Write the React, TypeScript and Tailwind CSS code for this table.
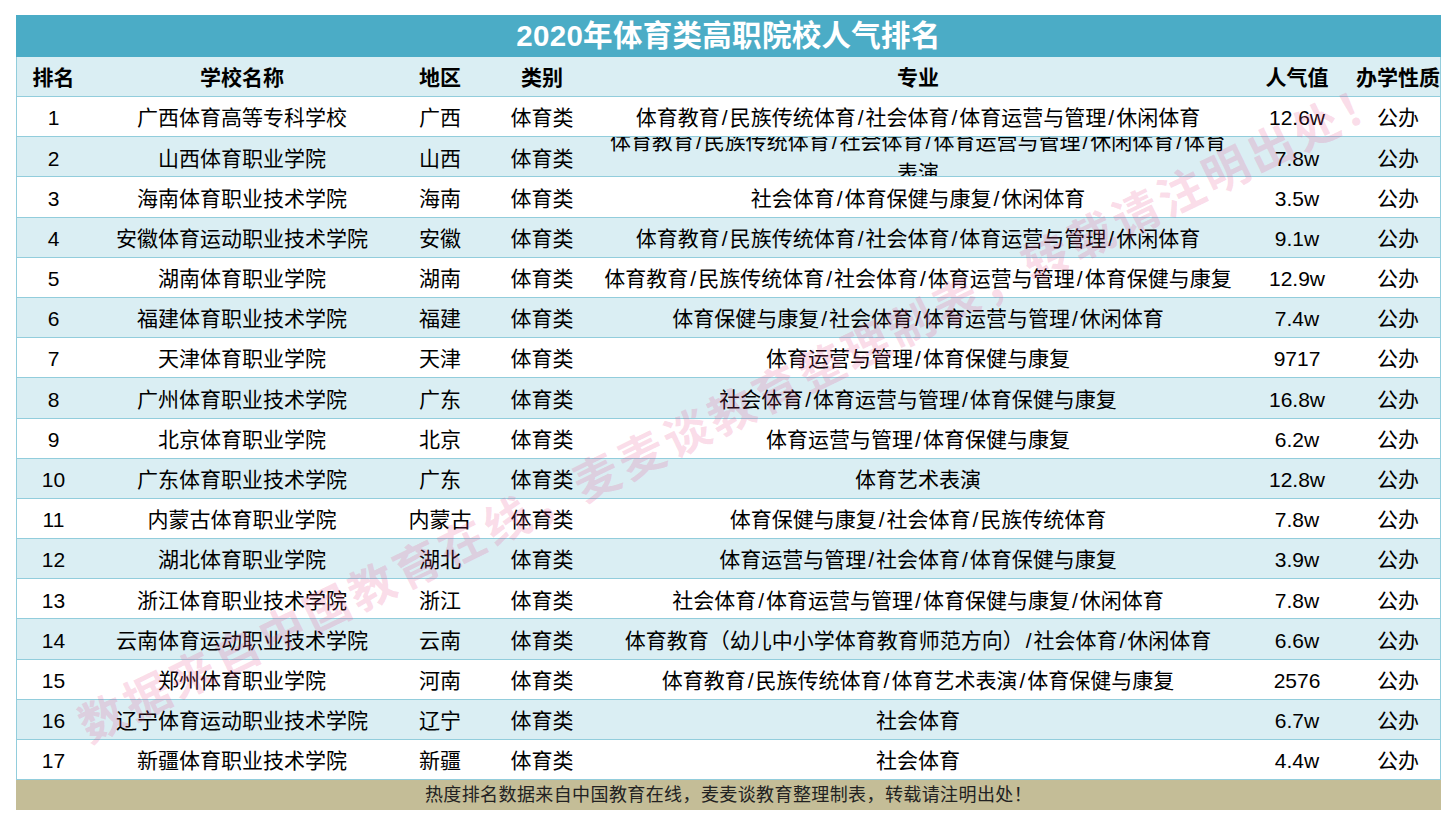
import React from "react";

type Row = { n: number; school: string; region: string; major: string; pop: string; wrap?: boolean };

const rows: Row[] = [
  { n: 1, school: "广西体育高等专科学校", region: "广西", major: "体育教育/民族传统体育/社会体育/体育运营与管理/休闲体育", pop: "12.6w" },
  { n: 2, school: "山西体育职业学院", region: "山西", major: "", pop: "7.8w", wrap: true },
  { n: 3, school: "海南体育职业技术学院", region: "海南", major: "社会体育/体育保健与康复/休闲体育", pop: "3.5w" },
  { n: 4, school: "安徽体育运动职业技术学院", region: "安徽", major: "体育教育/民族传统体育/社会体育/体育运营与管理/休闲体育", pop: "9.1w" },
  { n: 5, school: "湖南体育职业学院", region: "湖南", major: "体育教育/民族传统体育/社会体育/体育运营与管理/体育保健与康复", pop: "12.9w" },
  { n: 6, school: "福建体育职业技术学院", region: "福建", major: "体育保健与康复/社会体育/体育运营与管理/休闲体育", pop: "7.4w" },
  { n: 7, school: "天津体育职业学院", region: "天津", major: "体育运营与管理/体育保健与康复", pop: "9717" },
  { n: 8, school: "广州体育职业技术学院", region: "广东", major: "社会体育/体育运营与管理/体育保健与康复", pop: "16.8w" },
  { n: 9, school: "北京体育职业学院", region: "北京", major: "体育运营与管理/体育保健与康复", pop: "6.2w" },
  { n: 10, school: "广东体育职业技术学院", region: "广东", major: "体育艺术表演", pop: "12.8w" },
  { n: 11, school: "内蒙古体育职业学院", region: "内蒙古", major: "体育保健与康复/社会体育/民族传统体育", pop: "7.8w" },
  { n: 12, school: "湖北体育职业学院", region: "湖北", major: "体育运营与管理/社会体育/体育保健与康复", pop: "3.9w" },
  { n: 13, school: "浙江体育职业技术学院", region: "浙江", major: "社会体育/体育运营与管理/体育保健与康复/休闲体育", pop: "7.8w" },
  { n: 14, school: "云南体育运动职业技术学院", region: "云南", major: "体育教育（幼儿中小学体育教育师范方向）/社会体育/休闲体育", pop: "6.6w" },
  { n: 15, school: "郑州体育职业学院", region: "河南", major: "体育教育/民族传统体育/体育艺术表演/体育保健与康复", pop: "2576" },
  { n: 16, school: "辽宁体育运动职业技术学院", region: "辽宁", major: "社会体育", pop: "6.7w" },
  { n: 17, school: "新疆体育职业技术学院", region: "新疆", major: "社会体育", pop: "4.4w" },
];

const grid = "grid grid-cols-[73px_304px_92px_112px_640px_118px_84px]";
const cell = "flex items-center justify-center whitespace-nowrap overflow-hidden";
const dcell = "flex items-center justify-center whitespace-nowrap overflow-hidden pt-[3px]";

function Slashed({ text }: { text: string }) {
  const parts = text.split("/");
  return (
    <>
      {parts.map((p, i) => (
        <React.Fragment key={i}>
          {i > 0 && <span className="mx-[2px]">/</span>}
          {p}
        </React.Fragment>
      ))}
    </>
  );
}

export default function App() {
  return (
    <div
      className="relative w-[1452px] h-[832px] bg-white pt-[15px] pl-[16px] overflow-hidden text-black"
      style={{ fontFamily: "'Liberation Sans', 'Noto Sans CJK SC', sans-serif" }}
    >
      <div className="w-[1425px]">
        <div className="h-[42px] bg-[#4bacc6] flex items-center justify-center text-white font-bold text-[29.5px] tracking-[0.3px]">
          2020年体育类高职院校人气排名
        </div>
        <div className="border-x border-[#92cddc]">
          <div className={`${grid} h-[40px] bg-[#daeef3] border-b border-[#92cddc] font-bold text-[21px]`}>
            <div className={dcell}>排名</div>
            <div className={dcell}>学校名称</div>
            <div className={dcell}>地区</div>
            <div className={dcell}>类别</div>
            <div className={dcell}>专业</div>
            <div className={dcell}>人气值</div>
            <div className={`${dcell} justify-start`}>办学性质</div>
          </div>
          {rows.map((r) => (
            <div
              key={r.n}
              className={`${grid} h-[40.2px] border-b border-[#92cddc] text-[21px] ${r.n % 2 === 0 ? "bg-[#daeef3]" : "bg-white"}`}
            >
              <div className={dcell}>{r.n}</div>
              <div className={dcell}>{r.school}</div>
              <div className={dcell}>{r.region}</div>
              <div className={dcell}>体育类</div>
              {r.wrap ? (
                <div className="flex items-center justify-center overflow-hidden">
                  <div className="text-center leading-[31px] whitespace-nowrap">
                    <Slashed text="体育教育/民族传统体育/社会体育/体育运营与管理/休闲体育/体育" />
                    <br />
                    表演
                  </div>
                </div>
              ) : (
                <div className={dcell}>
                  <Slashed text={r.major} />
                </div>
              )}
              <div className={dcell}>{r.pop}</div>
              <div className={dcell}>公办</div>
            </div>
          ))}
        </div>
        <div className="h-[30px] bg-[#c4bd97] flex items-center justify-center text-[18px] tracking-[0.4px] text-[#222]">
          热度排名数据来自中国教育在线，麦麦谈教育整理制表，转载请注明出处！
        </div>
      </div>
      <div className="pointer-events-none absolute left-[734px] top-[412px] -translate-x-1/2 -translate-y-1/2 -rotate-[26deg] whitespace-nowrap text-[46px] font-bold tracking-[4px] text-[rgba(231,76,140,0.2)]">
        数据来自中国教育在线，麦麦谈教育整理制表，转载请注明出处！
      </div>
    </div>
  );
}
